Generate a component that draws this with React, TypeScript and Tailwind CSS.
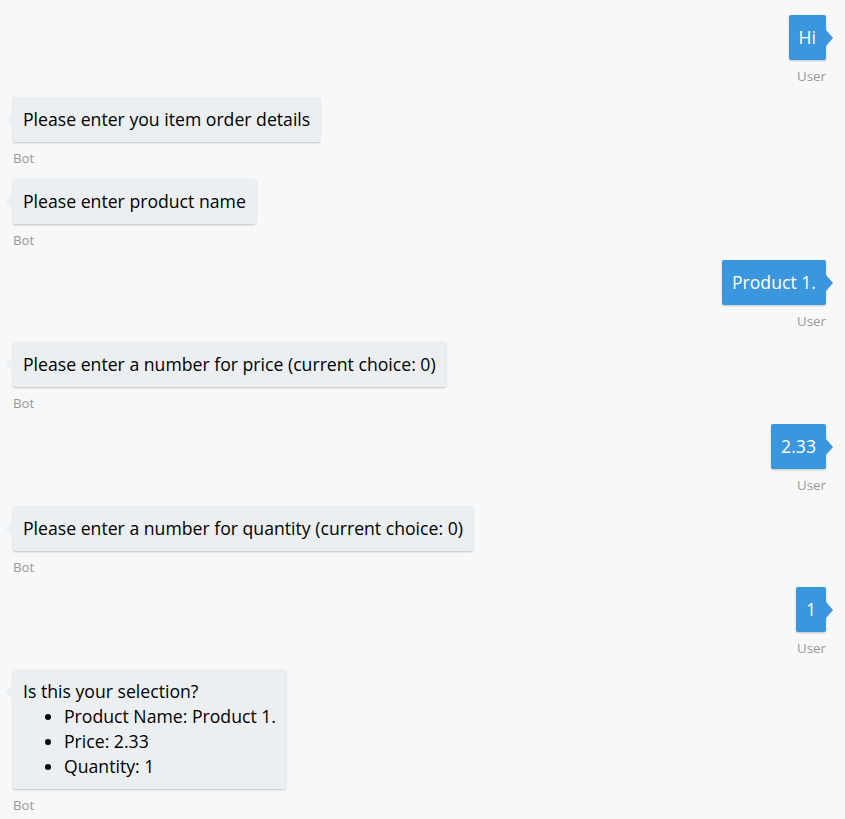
import React from "react";

type Msg = { from: "user" | "bot"; content: React.ReactNode };

const msgs: Msg[] = [
  { from: "user", content: "Hi" },
  { from: "bot", content: "Please enter you item order details" },
  { from: "bot", content: "Please enter product name" },
  { from: "user", content: "Product 1." },
  { from: "bot", content: "Please enter a number for price (current choice: 0)" },
  { from: "user", content: "2.33" },
  { from: "bot", content: "Please enter a number for quantity (current choice: 0)" },
  { from: "user", content: "1" },
  {
    from: "bot",
    content: (
      <div>
        <div>Is this your selection?</div>
        <ul className="list-disc pl-[41px]">
          <li>Product Name: Product 1.</li>
          <li>Price: 2.33</li>
          <li>Quantity: 1</li>
        </ul>
      </div>
    ),
  },
];

function Bubble({ m }: { m: Msg }) {
  const user = m.from === "user";
  return (
    <div className={`flex flex-col ${user ? "items-end" : "items-start"}`}>
      <div className="relative">
        {user ? (
          <div className="absolute right-[-7px] top-[15px] w-0 h-0 border-y-[8px] border-y-transparent border-l-[7px] border-l-[#3a96dd]" />
        ) : (
          <div className="absolute left-[-7px] top-[15px] w-0 h-0 border-y-[8px] border-y-transparent border-r-[7px] border-r-[#eceff1]" />
        )}
        <div
          className={`rounded-[2px] px-[10px] py-[10px] leading-[25px] text-[17.65px] shadow-[0_1px_2px_rgba(0,0,0,0.22)] ${
            user ? "bg-[#3a96dd] text-white" : "bg-[#eceff1] text-black"
          }`}
        >
          {m.content}
        </div>
      </div>
      <div className="text-[13.3px] text-[#999999] leading-[18px] mt-[7px]">{user ? "User" : "Bot"}</div>
    </div>
  );
}

export default function App() {
  return (
    <div
      className="min-h-[819px] w-[845px] bg-[#f8f8f8] pt-[15px] pl-[13px] pr-[19px] flex flex-col gap-[11.75px]"
      style={{ fontFamily: '"Open Sans", "Noto Sans", sans-serif' }}
    >
      {msgs.map((m, i) => (
        <Bubble key={i} m={m} />
      ))}
    </div>
  );
}
